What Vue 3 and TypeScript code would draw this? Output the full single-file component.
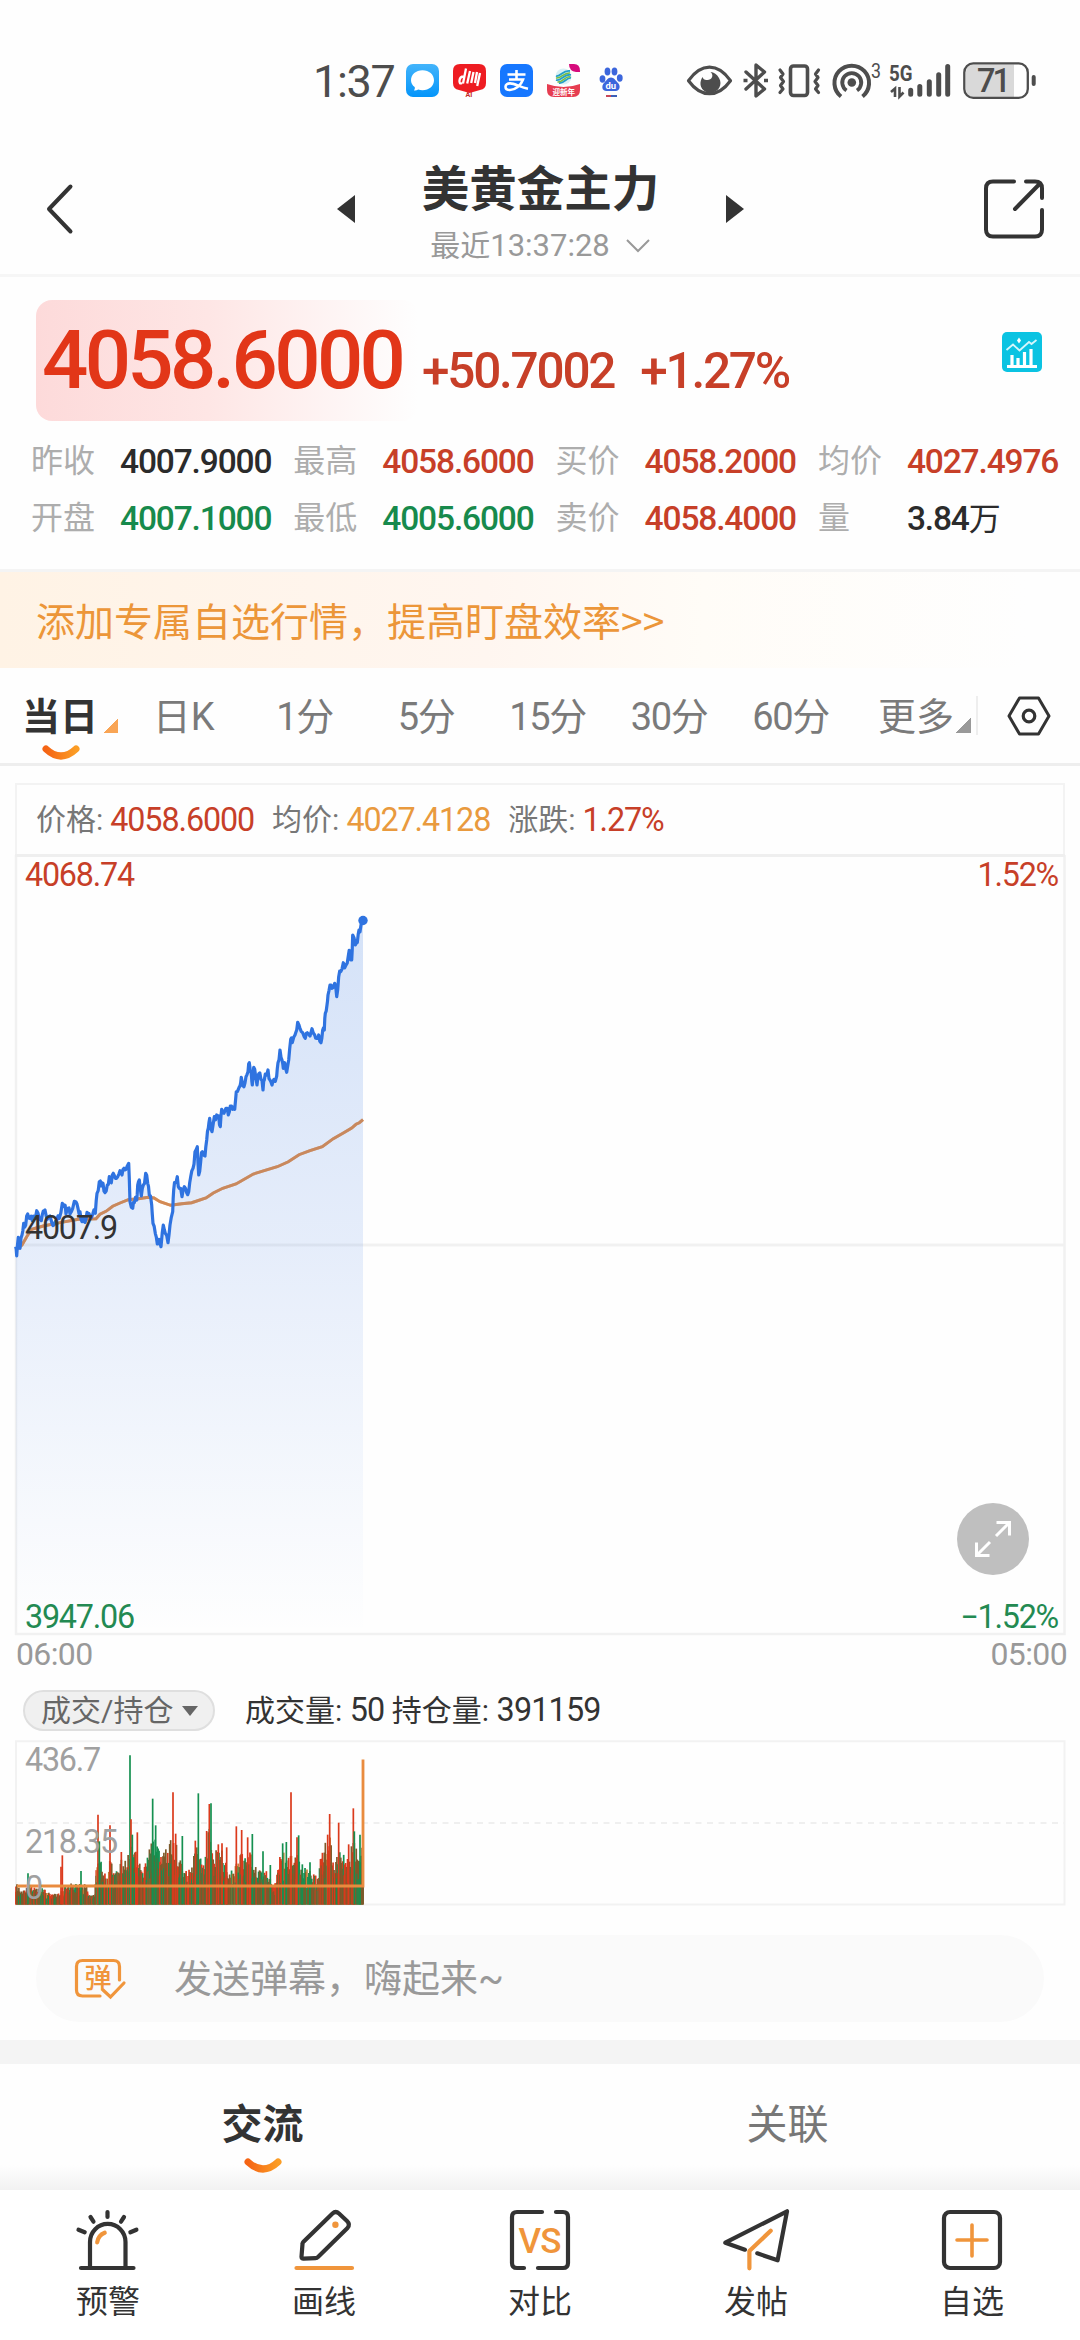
<script setup lang="ts">
type Point = [number, number]
interface Quote { label: string; value: string; tone: string; unit?: string }

const quotes: Quote[] = [
  { label: '昨收', value: '4007.9000', tone: 'ink' },
  { label: '最高', value: '4058.6000', tone: 'up' },
  { label: '买价', value: '4058.2000', tone: 'up' },
  { label: '均价', value: '4027.4976', tone: 'up' },
  { label: '开盘', value: '4007.1000', tone: 'down' },
  { label: '最低', value: '4005.6000', tone: 'down' },
  { label: '卖价', value: '4058.4000', tone: 'up' },
  { label: '量', value: '3.84', tone: 'ink', unit: '万' },
]

const periods = [
  { num: '', text: '日K' },
  { num: '1', text: '分' },
  { num: '5', text: '分' },
  { num: '15', text: '分' },
  { num: '30', text: '分' },
  { num: '60', text: '分' },
]

// Deterministic generator, so the intraday texture is stable between renders.
function makeRandom(seed: number): () => number {
  let s = seed
  return () => {
    s = (s * 1664525 + 1013904223) % 4294967296
    return s / 4294967296
  }
}

// Price samples, in thirds of a pixel.
const price: Point[] = [
  [47, 1100], [50, 1128], [55, 1072], [60, 1105], [66, 1065], [71, 1030], [77, 1035], [83, 1002], [90, 1015], [97, 1022],
  [104, 1010], [110, 992], [118, 1018], [124, 1022], [130, 993], [135, 990], [142, 1018], [150, 1008], [156, 1030], [162, 1035],
  [170, 1020], [178, 1015], [187, 970], [193, 975], [198, 1002], [204, 985], [210, 1002], [218, 985], [228, 966], [234, 985],
  [240, 995], [246, 1025], [252, 1012], [258, 1018], [264, 1000], [270, 1008], [278, 1003], [286, 1000], [291, 940], [298, 905],
  [304, 918], [309, 910], [315, 938], [322, 915], [328, 890], [334, 908], [340, 880], [346, 895], [353, 890], [360, 872],
  [366, 885], [372, 865], [378, 868], [386, 850], [390, 965], [398, 985], [403, 968], [410, 960], [413, 915], [418, 900],
  [424, 948], [430, 915], [437, 880], [443, 910], [448, 945], [455, 975], [459, 1030], [466, 1060], [472, 1092], [477, 1078],
  [483, 1100], [490, 1035], [496, 1060], [504, 1088], [510, 1035], [518, 995], [521, 930], [526, 908], [532, 890], [538, 925],
  [546, 950], [553, 920], [560, 938], [566, 935], [572, 890], [579, 865], [585, 815], [592, 800], [596, 885], [602, 845],
  [607, 815], [615, 828], [620, 780], [625, 745], [629, 715], [636, 755], [643, 710], [650, 705], [656, 708], [661, 740],
  [665, 688], [672, 700], [678, 685], [685, 705], [691, 678], [698, 688], [704, 688], [709, 635], [716, 625], [720, 618],
  [724, 592], [732, 620], [738, 590], [744, 575], [748, 548], [754, 580], [757, 615], [761, 562], [767, 590], [771, 615],
  [776, 582], [783, 598], [789, 630], [793, 600], [799, 585], [804, 570], [810, 600], [816, 615], [822, 598], [830, 588],
  [834, 548], [840, 510], [846, 540], [850, 565], [854, 548], [860, 577], [866, 540], [872, 478], [877, 488], [885, 465],
  [890, 450], [893, 427], [900, 445], [908, 458], [916, 475], [922, 458], [930, 468], [936, 446], [944, 465], [950, 475],
  [956, 465], [963, 488], [968, 450], [973, 450], [976, 400], [981, 375], [984, 345], [990, 315], [996, 325], [1004, 310],
  [1010, 350], [1016, 290], [1022, 275], [1030, 248], [1038, 255], [1045, 228], [1050, 215], [1055, 240], [1058, 165],
  [1066, 195], [1072, 188], [1077, 150], [1083, 135], [1089, 121],
]

const average: Point[] = [
  [47, 1110], [66, 1095], [80, 1070], [95, 1048], [130, 1038], [180, 1028], [235, 1018], [288, 1016], [300, 1003], [318, 994],
  [338, 979], [360, 969], [385, 959], [415, 956], [445, 952], [462, 954], [480, 965], [512, 976], [545, 971], [575, 968],
  [618, 954], [640, 939], [668, 925], [708, 912], [760, 882], [795, 871], [832, 860], [865, 845], [897, 824], [930, 812],
  [967, 800], [1000, 776], [1030, 759], [1055, 744], [1068, 733], [1078, 728], [1089, 719],
]

const toPx = ([x, y]: Point): Point => [x / 3, 25 + y / 3]

function jittered(points: Point[]): Point[] {
  const rnd = makeRandom(11)
  const out: Point[] = []
  points.forEach((p, i) => {
    out.push(p)
    const next = points[i + 1]
    if (next) {
      out.push([(p[0] + next[0]) / 2, (p[1] + next[1]) / 2 + (rnd() - 0.5) * 26])
    }
  })
  return out
}

const toPath = (points: Point[]): string =>
  'M' + points.map(toPx).map(([x, y]) => `${x.toFixed(1)} ${y.toFixed(1)}`).join('L')

const priceLine = toPath(jittered(price))
const priceArea = `${priceLine}V779H16Z`
const averageLine = toPath(average)

// Typical volume height along the session; y grows downwards to 523.
const envelope: Point[] = [
  [47, 445], [60, 480], [90, 462], [120, 470], [150, 488], [180, 490], [190, 470], [215, 455], [240, 462], [258, 455],
  [268, 495], [284, 490], [290, 370], [310, 400], [320, 445], [330, 385], [345, 420], [360, 390], [380, 380], [395, 330],
  [410, 370], [430, 420], [440, 380], [460, 320], [470, 310], [480, 350], [500, 345], [520, 320], [540, 370], [555, 425],
  [575, 410], [590, 335], [600, 380], [612, 400], [630, 260], [640, 370], [660, 345], [680, 400], [700, 425], [715, 370],
  [750, 360], [770, 415], [800, 420], [825, 460], [835, 370], [850, 360], [870, 370], [890, 345], [905, 410], [940, 425],
  [955, 440], [965, 350], [990, 318], [1005, 390], [1020, 350], [1040, 390], [1060, 330], [1080, 350], [1090, 340],
]

const RED = '#db3a1c'
const GREEN = '#159050'
const BROWN = '#7d5a2b'
const AMBER = '#c8853c'

interface Bar { x: number; y: number; color: string }

function envelopeAt(x: number): number {
  for (let i = 1; i < envelope.length; i++) {
    const [x1, y1] = envelope[i]
    if (x <= x1) {
      const [x0, y0] = envelope[i - 1]
      return y0 + ((y1 - y0) * (x - x0)) / (x1 - x0)
    }
  }
  return 340
}

function buildBars(): Bar[] {
  const rnd = makeRandom(2024)
  const list: Bar[] = []
  for (let x = 48; x < 1090; x += 2.9) {
    const top = envelopeAt(x)
    const r = rnd()
    let color = r < 0.36 ? RED : r < 0.56 ? GREEN : r < 0.96 ? BROWN : AMBER
    if (x > 438 && x < 475) color = r < 0.75 ? GREEN : BROWN
    if (x > 816 && x < 840) color = RED
    list.push({ x: x / 3, y: (top + rnd() * (523 - top) * 0.34) / 3, color })
    list.push({ x: x / 3, y: (top + (0.3 + rnd() * 0.3) * (523 - top)) / 3, color: r < 0.25 ? RED : r > 0.85 ? GREEN : BROWN })
  }
  const spikes: [number, number, string][] = [
    [84, 430, GREEN], [183, 410, RED], [187, 376, RED], [243, 423, GREEN], [294, 254, RED], [298, 334, GREEN], [330, 286, RED],
    [364, 366, RED], [390, 76, GREEN], [393, 268, RED], [397, 314, GREEN], [412, 307, RED], [458, 206, GREEN], [467, 286, GREEN],
    [519, 187, RED], [527, 311, RED], [547, 318, GREEN], [595, 190, GREEN], [586, 332, RED], [620, 303, RED], [628, 222, RED],
    [633, 220, GREEN], [655, 343, RED], [666, 340, RED], [680, 352, RED], [709, 289, RED], [725, 300, RED], [743, 322, RED],
    [757, 312, GREEN], [789, 364, GREEN], [811, 405, GREEN], [848, 340, GREEN], [859, 336, GREEN], [873, 187, RED], [891, 322, RED],
    [896, 316, GREEN], [907, 403, GREEN], [930, 397, GREEN], [983, 314, RED], [989, 252, RED], [1016, 278, RED], [1046, 343, RED],
    [1060, 235, RED], [1063, 304, GREEN], [1080, 314, GREEN],
  ]
  spikes.forEach(([x, y, color]) => list.push({ x: x / 3, y: y / 3, color }))
  return list
}

const bars = buildBars()
</script>

<template>
  <main class="screen">
    <div class="status">
      <span class="clock">1:37</span>
      <svg class="app" viewBox="0 0 33 33">
        <defs><linearGradient id="msg" x2="0" y2="1"><stop stop-color="#43b4fb" /><stop offset="1" stop-color="#0495fa" /></linearGradient></defs>
        <rect width="33" height="33" rx="7" fill="url(#msg)" />
        <path d="M16.500 6.200c6.600 0 11.500 4.300 11.500 10s-4.900 10-11.500 10c-1.600 0-3-.2-4.300-.7-1.200.9-2.700 1.200-4.200 1 .8-1 1-2.200.7-3.400C6.400 21.200 5 18.900 5 16.200c0-5.700 4.900-10 11.500-10z" fill="#fff" />
      </svg>
      <svg class="app" viewBox="0 0 33 33">
        <path d="M7 0h19q7 0 7 7v12q0 6-6 7l-10.500 3L6 26q-6-1-6-7V7q0-7 7-7z" fill="#ee1c22" />
        <path d="M10.500 12.500q-3.500 0-4 4t2.500 2.500M13 4.500l-3 15M17 7l-2.800 12.500M20.500 8l-2.300 11M24 8l-2 11M27 9l-2.800 13" stroke="#fff" stroke-width="2.300" fill="none" />
        <text x="12.500" y="32.500" font-size="7" font-weight="700" fill="#c42a26">AI</text>
      </svg>
      <svg class="app" viewBox="0 0 33 33">
        <rect width="33" height="33" rx="7" fill="#1677ff" />
        <path d="M7.500 10.500h18M16.500 6v9M9 15.500h14c-2 6-8 10.500-13 10.500-3 0-4.500-1.500-4.500-3.300 0-2 2-3.300 4.500-3.300 5 0 10 3.800 18 5.300" stroke="#fff" stroke-width="2.600" fill="none" />
      </svg>
      <svg class="app" viewBox="0 0 33 33">
        <circle cx="16.500" cy="12.500" r="8" fill="#d9f0f4" />
        <path d="M9 12c4 1 7-6 14-5M9 16c5 2 8-7 15-5M12 19c5 1 8-6 12-5" stroke="#239fc8" stroke-width="1.800" fill="none" />
        <path d="M9 14c5 1 8-6 14-5M10.500 18c5 1 8-7 13-5" stroke="#78bd43" stroke-width="1.500" fill="none" />
        <path d="M22 0h5q6 0 6 7v1h-4q-7-1-7-8z" fill="#d60b7c" />
        <path d="M0 20q16.500 6 33 0v6q0 7-7 7H7q-7 0-7-7z" fill="#e63d51" />
        <text x="5.500" y="31" font-size="7.500" font-weight="700" fill="#fff" class="cjk">迎新年</text>
      </svg>
      <svg class="app" viewBox="0 0 33 33">
        <g fill="#3c66dc">
          <ellipse cx="8.500" cy="15" rx="2.900" ry="3.700" /><ellipse cx="13.500" cy="7.500" rx="2.900" ry="4" />
          <ellipse cx="20.500" cy="7.500" rx="2.900" ry="4" /><ellipse cx="25.800" cy="14" rx="2.900" ry="3.700" />
          <path d="M17 13.500c3 0 4.500 3 7 5.500 2.500 2.300 2.500 8-2.500 8h-9c-5 0-5-5.500-2.500-8 2.500-2.500 4-5.500 7-5.500z" />
        </g>
        <text x="11.500" y="25" font-size="9.500" font-weight="700" fill="#fff">du</text>
        <path d="M12 32h6" stroke="#c8485a" stroke-width="2" /><path d="M17 32h6" stroke="#3c5fb8" stroke-width="2" />
      </svg>
      <svg class="sys" viewBox="0 0 370 44">
        <path d="M287 5.500h41v32.500h-41q-7 0-7-7v-18.500q0-7 7-7z" fill="#d9d9d9" />
        <g fill="none" stroke="#4d4d4d">
          <path d="M2.500 21.700Q12 8.200 23.500 8.200T44.500 21.700Q35 34.700 23.500 34.700T2.500 21.700z" stroke-width="3.200" stroke-linejoin="round" />
          <path d="M60 13l18.500 17-8.500 7V6l8.500 7L60 30" stroke-width="3.400" stroke-linejoin="round" stroke-linecap="round" />
          <path d="M57.500 21.500h4M78 21.500h4" stroke-width="3.400" />
          <rect x="104.500" y="7" width="17" height="29.500" rx="3" stroke-width="3.600" />
          <path d="M94 11l3 4-2.500 3.500 3 4-3 4 2.500 3.500-3 3.500M132.500 11l-3 4 2.500 3.500-3 4 3 4-2.500 3.500 3 3.500" stroke-width="3.200" stroke-linejoin="round" stroke-linecap="round" />
          <path d="M155 37.500a17.300 17.300 0 1 1 21.500 0" stroke-width="4" />
          <path d="M160.500 31.500a9.500 9.500 0 1 1 10.500 0" stroke-width="3.800" />
          <path d="M209 38V29.500l-4 3.500M213.500 28v9.500l4-4" stroke-width="2.600" />
          <path d="M224.700 31.200v4M233.800 27.500v7.700M243.300 22.800v12.400M252.700 15.800v19.400M261.700 7.500v27.700" stroke-width="5" stroke-linecap="round" />
          <rect x="278.300" y="4.400" width="63.500" height="34.500" rx="9" stroke-width="2.300" />
        </g>
        <path d="M24.500 13c4 3.500 1 8-3 8s-4-1-5-3c-5 8 0 15.700 8 15.700s12.500-8 8.500-14.700c-2-4-5-5.500-8.500-6z" fill="#4d4d4d" />
        <circle cx="165.800" cy="23.500" r="4.300" fill="#4d4d4d" />
        <path d="M347.700 18v7" stroke="#4d4d4d" stroke-width="4" stroke-linecap="round" />
        <g fill="#4d4d4d">
          <text x="185" y="18.500" font-size="20" textLength="10" lengthAdjust="spacingAndGlyphs">3</text>
          <text x="203" y="21.500" font-size="22" font-weight="700" textLength="23.500" lengthAdjust="spacingAndGlyphs">5G</text>
          <text x="291" y="33.300" font-size="32.500" font-weight="500" textLength="34">71</text>
        </g>
      </svg>
    </div>

    <header class="header">
      <svg class="back" viewBox="0 0 28 50"><path d="M24.500 2.500L3 25l21.500 22.500" fill="none" stroke="#333" stroke-width="4" stroke-linecap="round" stroke-linejoin="round" /></svg>
      <div class="middle">
        <svg class="tri" viewBox="0 0 18 28"><path d="M18 0v28L0 14z" fill="#333" /></svg>
        <div class="titles">
          <h1>美黄金主力</h1>
          <p>最近<span class="num">13:37:28</span><svg viewBox="0 0 26 14"><path d="M2 1l11 11L24 1" fill="none" stroke="#999" stroke-width="2" /></svg></p>
        </div>
        <svg class="tri" viewBox="0 0 18 28"><path d="M0 0v28l18-14z" fill="#333" /></svg>
      </div>
      <svg class="share" viewBox="0 0 64 64"><path d="M32 4.500H11q-7 0-7 7v41q0 7 7 7h42q7 0 7-7V33M44 4.500h9q7 0 7 7V21M33 32L58 6.500" fill="none" stroke="#333" stroke-width="4" stroke-linecap="round" /></svg>
    </header>

    <section class="quote">
      <div class="headline">
        <strong class="last">4058.6000</strong>
        <span class="delta">+50.7002</span>
        <span class="delta pct">+1.27%</span>
        <svg class="trend" viewBox="0 0 40 40">
          <rect width="40" height="40" rx="5" fill="#0bc3e2" />
          <path d="M5 34.500h30M10 33V23M16 33V26M22.500 33V20M29 33V17" stroke="#fff" stroke-width="3.200" fill="none" />
          <path d="M4.500 18L11 12.500l6.500 6L27 10l2.500 2L34.500 8" stroke="#d5f6fb" stroke-width="1.800" fill="none" />
          <path d="M17 5.500l2 3-2 3-2-3z" fill="#fff" />
        </svg>
      </div>
      <dl class="grid">
        <div v-for="q in quotes" :key="q.label">
          <dt>{{ q.label }}</dt>
          <dd :class="q.tone"><span class="num">{{ q.value }}</span><span v-if="q.unit" class="unit">{{ q.unit }}</span></dd>
        </div>
      </dl>
    </section>

    <div class="banner">添加专属自选行情，提高盯盘效率&gt;&gt;</div>

    <nav class="periods">
      <div class="current">
        <b>当日</b><i class="corner"></i>
        <svg class="smile" viewBox="0 0 38 16"><path d="M4 4q15 14 30 0" fill="none" stroke="url(#warm)" stroke-width="7" stroke-linecap="round" /></svg>
      </div>
      <span v-for="p in periods" :key="p.num + p.text" class="period"><span class="num">{{ p.num }}</span>{{ p.text }}</span>
      <div class="more">更多<i class="corner gray"></i></div>
      <svg class="hex" viewBox="0 0 44 40"><path d="M12.500 2h19L42 20 31.500 38h-19L2 20z" fill="none" stroke="#333" stroke-width="3" stroke-linejoin="round" /><circle cx="22" cy="20" r="5.800" fill="none" stroke="#333" stroke-width="3.200" /></svg>
    </nav>

    <div class="info">
      <span>价格:</span><span class="num up">4058.6000</span>
      <span class="lead">均价:</span><span class="num gold">4027.4128</span>
      <span class="lead">涨跌:</span><span class="num up">1.27%</span>
    </div>

    <svg class="chart" width="1080" height="780" viewBox="0 0 1080 780">
      <defs>
        <linearGradient id="fill" x2="0" y2="1"><stop stop-color="#2f73e0" stop-opacity=".2" /><stop offset=".45" stop-color="#2f6fe0" stop-opacity=".12" /><stop offset="1" stop-color="#2f6fe0" stop-opacity="0" /></linearGradient>
        <linearGradient id="warm"><stop stop-color="#f56414" /><stop offset="1" stop-color="#fb9d25" /></linearGradient>
      </defs>
      <path d="M16 0V779H1064.500V0" fill="none" stroke="#f1f1f1" stroke-width="2.500" />
      <path d="M15 .5H1065" stroke="#efefef" stroke-width="3" />
      <path d="M16 390H1065" stroke="#f1f1f1" stroke-width="3" />
      <path :d="averageLine" fill="none" stroke="#e08a40" stroke-width="2.900" />
      <path :d="priceArea" fill="url(#fill)" />
      <path :d="averageLine" fill="none" stroke="#c98a62" stroke-width="2.900" opacity=".6" />
      <path :d="priceLine" fill="none" stroke="#2f73e0" stroke-width="3.200" stroke-linejoin="round" />
      <circle cx="363" cy="65.500" r="4.700" fill="#2f73e0" />
      <g class="num" font-size="32.300">
        <text x="25" y="31" fill="#c73f28">4068.74</text>
        <text x="1058" y="31" fill="#c73f28" text-anchor="end">1.52%</text>
        <text x="25" y="384" fill="#333">4007.9</text>
        <text x="25" y="773" fill="#238a52">3947.06</text>
        <text x="1058" y="773" fill="#238a52" text-anchor="end">−1.52%</text>
      </g>
      <circle cx="993" cy="684" r="36" fill="#bfbfbf" />
      <path d="M996 681l13-13M996.500 667.500h13v13M990 687l-13 13M976.500 687.500v13h13" fill="none" stroke="#fff" stroke-width="3" />
    </svg>
    <div class="axis"><span>06:00</span><span>05:00</span></div>

    <div class="volhead">
      <button>成交/持仓<i></i></button>
      <span class="legend">成交量: <span class="num">50</span> 持仓量: <span class="num">391159</span></span>
    </div>

    <svg class="volume" width="1080" height="166" viewBox="0 0 1080 166">
      <path d="M16 1.200H1064.500V164.500H16z" fill="none" stroke="#f2f2f2" stroke-width="2" />
      <path d="M17 83H1064" stroke="#efefef" stroke-width="2" stroke-dasharray="6 5.500" />
      <g transform="translate(0 -10)">
        <path v-for="(b, i) in bars" :key="i" :d="`M${b.x} 174.500V${b.y}`" :stroke="b.color" stroke-width="1.700" />
      </g>
      <path d="M17 146H363V19.500" fill="none" stroke="#e98b3e" stroke-width="2.800" />
      <g class="num" font-size="32.300" fill="#a0a0a0">
        <text x="25" y="31">436.7</text>
        <text x="25" y="113">218.35</text>
        <text x="25" y="159">0</text>
      </g>
    </svg>

    <div class="danmu">
      <svg viewBox="0 0 52 44">
        <path d="M26 39H8.500q-6 0-6-6V9.500q0-6 6-6h31q6 0 6 6V23" fill="none" stroke="#f0953b" stroke-width="3.200" stroke-linecap="round" />
        <path d="M29 33l7.500 7L50 26" fill="none" stroke="#f0953b" stroke-width="3.200" stroke-linecap="round" />
        <text x="10.500" y="31" font-size="27" font-weight="500" fill="#f0953b" class="cjk">弹</text>
      </svg>
      <span>发送弹幕，嗨起来~</span>
    </div>

    <div class="tabs">
      <div class="tab active">交流<svg class="smile" viewBox="0 0 38 16"><path d="M4 4q15 14 30 0" fill="none" stroke="url(#warm)" stroke-width="7" stroke-linecap="round" /></svg></div>
      <div class="tab">关联</div>
    </div>

    <footer class="dock">
      <div>
        <svg viewBox="0 0 64 64"><path d="M14 60V34a17.700 18 0 0 1 35.500 0V60M5 60H57.500M31.500 4v5M14.500 9l3 4.700M48 9l-3 4.700M2.500 21.700l6.200 2.600M60.400 21.700l-6 2.600" class="ln" /><path d="M21.200 34.300q1-7 7.500-9.600" class="ln or" /></svg>
        预警
      </div>
      <div>
        <svg viewBox="0 0 64 64"><path d="M40.500 5.500q3.200-3 6.500 0l8 7.500q3.500 3.500.5 7L26 49q-1 1.200-2.500 1.200L11.500 50.700q-2 0-2-2L10.500 36q0-1.200 1-2.200z" class="ln" /><circle cx="43.400" cy="16.700" r="3.200" fill="#f0953b" /><path d="M4.500 60H60" class="ln or" /></svg>
        画线
      </div>
      <div>
        <svg viewBox="0 0 64 64"><path d="M34 4H9q-5 0-5 5V55q0 5 5 5h7M48 4h7q5 0 5 5V55q0 5-5 5H30" class="ln" /><text x="10.500" y="44.500" font-size="35" font-weight="500" textLength="43" fill="#f0953b">VS</text></svg>
        对比
      </div>
      <div>
        <svg viewBox="0 0 68 64" class="wide"><path d="M22.900 41.700L3.300 34.700 65 3.300 55.600 52.300 35.300 45.300" class="ln" /><path d="M48.700 22.700L27.400 43V60.300" class="ln or" /></svg>
        发帖
      </div>
      <div>
        <svg viewBox="0 0 64 64"><rect x="4" y="4" width="56" height="56" rx="6" class="ln" /><path d="M32 17v31M17 32H47" class="ln or thin" /></svg>
        自选
      </div>
    </footer>
  </main>
</template>

<style>
html, body { margin: 0; background: #fff; }
</style>

<style scoped>
.screen { width: 1080px; height: 2340px; overflow: hidden; display: flex; flex-direction: column; background: #fefefe; color: #333; font-family: Roboto, "Noto Sans CJK SC", sans-serif; }
.screen > * { flex: none; box-sizing: border-box; }
svg { display: block; flex: none; overflow: visible; }
.num { letter-spacing: -0.038em; }
g.num text { letter-spacing: -0.038em; }
.cjk { font-family: "Noto Sans CJK SC", sans-serif; }
.up { color: #c73f28; }
.down { color: #178a4c; }
.ink { color: #2b2b2b; }
.gold { color: #e99a3e; }

.status { height: 140px; padding: 60px 0 0 313px; display: flex; align-items: flex-start; }
.clock { width: 93px; font-size: 45px; line-height: 44px; color: #4d4d4d; letter-spacing: -1.300px; }
.app { width: 33px; height: 33px; margin: 4px 14px 0 0; }
.sys { width: 370px; height: 44px; margin: -1px 0 0 45px; }

.header { height: 137px; padding: 0 34px 0 46px; border-bottom: 3px solid #f6f6f6; display: flex; justify-content: space-between; align-items: flex-start; }
.back { width: 28px; height: 50px; margin-top: 44px; }
.middle { display: flex; width: 407px; justify-content: space-between; margin-left: 25px; }
.tri { width: 18px; height: 28px; margin-top: 55px; }
.titles { display: flex; flex-direction: column; align-items: center; }
h1 { margin: 20px 0 0; font-size: 47.500px; line-height: 60px; font-weight: 700; }
.titles p { margin: 7px 0 0; font-size: 30px; line-height: 38px; color: #999; display: flex; align-items: center; }
.titles p .num { font-size: 31px; letter-spacing: 0; }
.titles p svg { width: 26px; height: 14px; margin-left: 15px; }
.share { width: 64px; height: 64px; margin-top: 37px; }

.quote { height: 295px; padding: 23px 0 0; border-bottom: 3px solid #f4f4f4; }
.headline { display: flex; align-items: flex-start; padding: 0 38px 0 36px; height: 120px; color: #c73f28; }
.last { box-sizing: border-box; width: 382px; padding-left: 6px; border-radius: 16px; background: linear-gradient(90deg, #fddada, #fee6e5 45%, #fefefe); font-size: 81.500px; line-height: 121px; font-weight: 500; letter-spacing: -0.045em; color: #e23618; }
.delta { margin-left: 4px; font-size: 49.500px; line-height: 143px; font-weight: 500; letter-spacing: -0.045em; }
.pct { margin-left: 26px; }
.trend { width: 40px; height: 40px; margin: 32px 0 0 auto; }
.grid { margin: 13px 0 0 31px; display: grid; grid-template-columns: repeat(4, 262.300px); grid-auto-rows: 57px; line-height: 57px; }
.grid div { display: flex; }
dt { width: 89px; font-size: 32px; color: #adadad; }
dd { margin: 0; font-size: 33.500px; font-weight: 500; white-space: nowrap; }
dd .num { letter-spacing: -0.034em; }
.unit { font-size: 32px; font-weight: 400; }

.banner { height: 96px; padding-left: 36px; font-size: 39px; line-height: 94px; color: #ec9639; background: linear-gradient(90deg, #fff3e5, #fff6f0 45%, #fffcf7 65%, #fefefe 95%); font-family: "Noto Sans CJK SC", sans-serif; }

.periods { height: 98px; border-bottom: 3px solid #eee; display: flex; font-size: 38px; line-height: 99px; color: #7a7a7a; }
.current { position: relative; width: 123px; padding-left: 22px; box-sizing: border-box; display: flex; color: #333; }
.current b { font-weight: 700; }
.corner { width: 15px; height: 15px; margin: 50px 0 0 5px; background: linear-gradient(135deg, transparent 50%, #f9a555 50%); }
.corner.gray { background: linear-gradient(135deg, transparent 50%, #999 50%); margin-left: 2px; }
.smile { position: absolute; width: 38px; height: 16px; left: 42px; top: 77px; }
.period { width: 121.500px; text-align: center; }
.more { width: 126px; box-sizing: border-box; padding-left: 26px; display: flex; position: relative; }
.more::after { content: ""; position: absolute; right: 0; top: 28px; width: 2px; height: 39px; background: #eee; }
.hex { width: 44px; height: 40px; margin: 28px 0 0 29px; }

.info { height: 72px; margin: 17px 15px 0; padding-left: 19px; border: 2px solid #f3f3f3; border-bottom: 0; display: flex; font-size: 30px; line-height: 70px; color: #777; }
.info .num { font-size: 32.300px; margin-left: 7px; letter-spacing: -0.034em; }
.info .lead { margin-left: 18px; }

.axis { height: 38px; padding: 0 13px 0 16px; display: flex; justify-content: space-between; font-size: 32px; letter-spacing: -0.02em; line-height: 38px; color: #999; }
.volhead { height: 67px; padding: 17px 0 0 23px; display: flex; }
button { box-sizing: border-box; width: 192px; height: 41px; padding: 0 0 0 16px; border: 2px solid #dfdfdf; border-radius: 21px; background: #f0f0f0; font: 30px/38px Roboto, "Noto Sans CJK SC", sans-serif; color: #666; display: flex; }
button i { margin: 14px 0 0 9px; height: 0; border: 8px solid transparent; border-top: 10px solid #666; border-bottom: 0; }
.legend { margin-left: 30px; font-size: 30px; line-height: 41px; white-space: pre; }
.legend .num { font-size: 32.300px; letter-spacing: -0.025em; }

.danmu { height: 87px; margin: 29px 36px 0; padding-left: 38px; border-radius: 44px; background: #fafafa; display: flex; align-items: center; font-size: 38px; color: #999; }
.danmu svg { width: 52px; height: 44px; margin-right: 48px; }
.danmu span { line-height: 84px; }

.tabs { height: 150px; margin-top: 18px; border-top: 24px solid #f4f4f4; display: flex; background: linear-gradient(#fefefe 80%, #f2f2f2); background-clip: padding-box; }
.tab { position: relative; width: 525px; text-align: center; font-size: 41px; line-height: 122px; color: #777; }
.tab.active { font-weight: 700; color: #333; }
.tab .smile { left: 50%; margin-left: -19px; top: 94px; }

.dock { height: 150px; padding-top: 18px; background: #fff; display: flex; }
.dock div { flex: 1; display: flex; flex-direction: column; align-items: center; font-size: 32px; line-height: 60px; }
.dock svg { width: 64px; height: 64px; }
.dock svg.wide { width: 68px; }
.ln { fill: none; stroke: #333; stroke-width: 4.200; stroke-linecap: round; stroke-linejoin: round; }
.ln.or { stroke: #f0953b; }
.ln.thin { stroke-width: 3.600; }
</style>
